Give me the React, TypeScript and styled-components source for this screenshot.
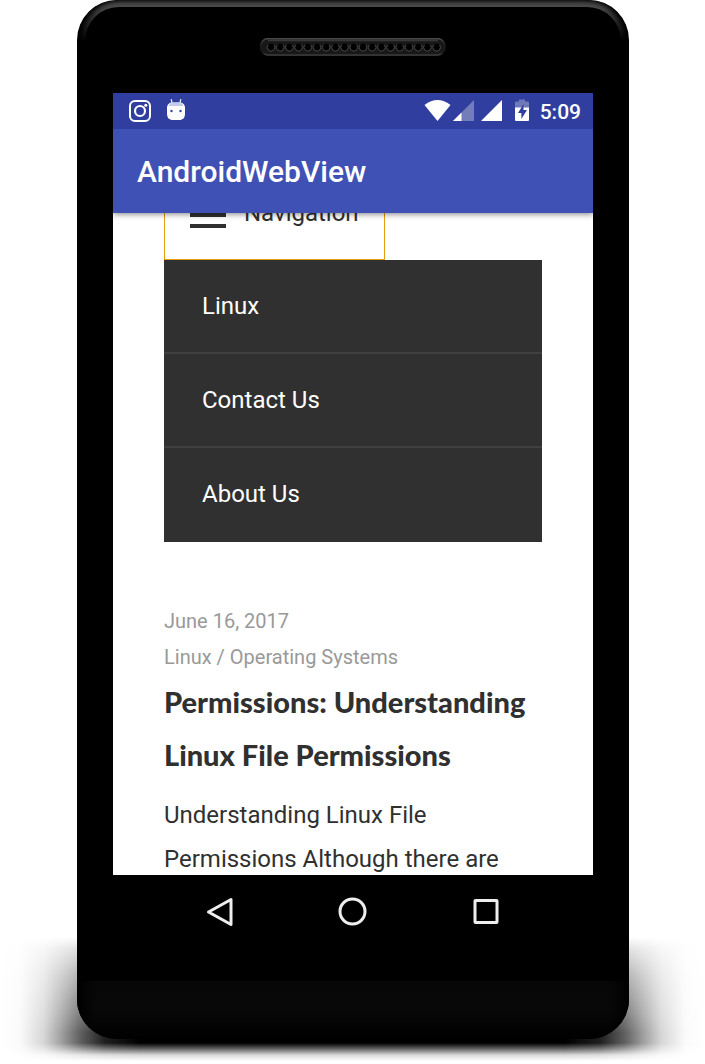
import React from "react";
import styled, { createGlobalStyle } from "styled-components";

const GlobalStyle = createGlobalStyle`
  * { box-sizing: border-box; }
  body { margin: 0; background: #fff; font-family: Roboto, "Liberation Sans", sans-serif; }
  button { font: inherit; cursor: pointer; }
  a { color: inherit; text-decoration: none; }
  h1, h2, p, ul { margin: 0; padding: 0; }
`;

const Stage = styled.div`
  position: relative;
  padding: 0 76px 24px 77px;
  overflow: hidden;
`;

const FloorShadow = styled.div`
  position: absolute;
  left: 0;
  right: 0;
  bottom: 2px;
  height: 124px;
  background: linear-gradient(
    to right,
    transparent 0,
    rgba(0, 0, 0, 0.02) 20px,
    rgba(0, 0, 0, 0.16) 44px,
    rgba(0, 0, 0, 0.38) 62px,
    rgba(0, 0, 0, 0.62) 80px,
    rgba(0, 0, 0, 0.88) 105px,
    #000 140px,
    #000 calc(100% - 140px),
    rgba(0, 0, 0, 0.88) calc(100% - 105px),
    rgba(0, 0, 0, 0.62) calc(100% - 80px),
    rgba(0, 0, 0, 0.38) calc(100% - 62px),
    rgba(0, 0, 0, 0.16) calc(100% - 44px),
    rgba(0, 0, 0, 0.02) calc(100% - 20px),
    transparent 100%
  );
  mask-image: linear-gradient(
    to bottom,
    transparent 0,
    rgba(0, 0, 0, 0.2) 12px,
    rgba(0, 0, 0, 0.5) 40px,
    rgba(0, 0, 0, 0.8) 76px,
    #000 96px,
    #000 106px,
    rgba(0, 0, 0, 0.6) 112px,
    rgba(0, 0, 0, 0.15) 118px,
    transparent 124px
  );
`;

const Phone = styled.div`
  position: relative;
  display: flex;
  flex-direction: column;
  padding: 0 36px;
  overflow: hidden;
  border-radius: 40px;
  background: #000;
`;

const TopGloss = styled.div`
  position: absolute;
  inset: 0 0 auto;
  height: 60px;
  border-radius: 40px 40px 0 0;
  background: #484848;
  mask-image: linear-gradient(to bottom, #000 0, #000 8px, transparent 42px);

  &::after {
    content: "";
    position: absolute;
    inset: 7px 8px 0;
    border-radius: 34px 34px 0 0;
    background: #000;
  }
  &::before {
    content: "";
    position: absolute;
    inset: 0;
    border-radius: 40px 40px 0 0;
    box-shadow: inset 5px 0 5px #000, inset -5px 0 5px #000;
  }
`;

const Earpiece = styled.div`
  position: relative;
  display: flex;
  justify-content: center;
  align-items: center;
  height: 93px;
`;

const Screen = styled.div`
  background: #fff;
`;

const StatusBar = styled.div`
  display: flex;
  align-items: center;
  justify-content: space-between;
  height: 36px;
  padding: 0 12px 0 16px;
  background: #303f9f;
  color: #fff;
`;

const Notifications = styled.div`
  display: flex;
  align-items: center;
  gap: 15px;
`;

const Indicators = styled.div`
  display: flex;
  align-items: center;
`;

const Clock = styled.time`
  margin-left: 8px;
  padding-top: 2px;
  font-size: 21px;
  line-height: 34px;
  font-weight: 500;
`;

const AppBar = styled.header`
  position: relative;
  z-index: 1;
  display: flex;
  align-items: center;
  height: 84px;
  padding: 2px 24px 0;
  background: #3f51b5;
  box-shadow: 0 1px 6px rgba(0, 0, 0, 0.5);
  clip-path: inset(0 0 -8px 0);
  color: #fff;
`;

const AppTitle = styled.h1`
  font-size: 30px;
  line-height: 40px;
  font-weight: 500;
`;

const WebView = styled.main`
  max-height: 662px;
  padding: 0 51px;
  overflow: hidden;
  color: #303030;
`;

const SiteNav = styled.nav`
  margin-top: -47px;
`;

const MenuToggle = styled.button`
  display: flex;
  align-items: center;
  gap: 18px;
  height: 94px;
  padding: 0 25px;
  border: 1px solid #e89c10;
  background: #fff;
  color: #303030;
  font-size: 24px;
  line-height: 44px;
`;

const MenuList = styled.ul`
  list-style: none;
  background: #303030;
  color: #fff;
`;

const MenuItem = styled.li`
  height: 94px;
  border-bottom: 2px solid #404040;

  &:last-child { border-bottom: 0; }
`;

const MenuLink = styled.a`
  display: flex;
  align-items: center;
  height: 92px;
  padding: 0 38px;
  font-size: 24px;
  line-height: 44px;
`;

const Article = styled.article`
  padding-top: 61px;
`;

const Meta = styled.p`
  color: #999;
  font-size: 20px;
  line-height: 36px;
`;

const ArticleTitle = styled.h2`
  font-family: Lato, "Open Sans", sans-serif;
  font-size: 29px;
  line-height: 53px;
  font-weight: 900;
`;

const Excerpt = styled.p`
  padding-top: 12px;
  font-size: 24px;
  line-height: 44px;
`;

const SystemNav = styled.nav`
  display: flex;
  justify-content: space-between;
  height: 106px;
  padding: 0 83px;
`;

const SystemButton = styled.button`
  width: 48px;
  height: 73px;
  padding: 0;
  border: 0;
  background: transparent;
  line-height: 0;
`;

const Chin = styled.div`
  height: 58px;
  margin: 0 -36px;
  background:
    linear-gradient(to right, #000, transparent 20px, transparent calc(100% - 20px), #000),
    linear-gradient(to bottom, #070707, #080808 50%, #000);
`;

const holes = Array.from({ length: 19 }, (_, i) => 11 + i * 9.2);

const Speaker = () => (
  <svg width="186" height="18" viewBox="0 0 186 18" aria-hidden="true">
    <defs>
      <linearGradient id="rim" x1="0" y1="0" x2="0" y2="1">
        <stop offset="0" stopColor="#4a4a4a" />
        <stop offset="0.45" stopColor="#1a1a1a" />
        <stop offset="0.85" stopColor="#1a1a1a" />
        <stop offset="1" stopColor="#444" />
      </linearGradient>
    </defs>
    <rect x="0.5" y="0.5" width="184.5" height="16.5" rx="8" fill="#181818" stroke="url(#rim)" strokeWidth="1.5" />
    <path d="M8 2.2H178" stroke="#383838" strokeWidth="2" />
    {holes.map((x) => (
      <g key={x}>
        <circle cx={x} cy="9.3" r="3.5" fill="#000" />
        <path d={`M${x - 3} 7a3.800 3.800 0 1 0 6 0`} fill="none" stroke="#4c4c4c" strokeWidth="0.9" />
      </g>
    ))}
  </svg>
);

const CameraIcon = () => (
  <svg width="22" height="22" viewBox="0 0 22 22" fill="none" stroke="#fff" aria-hidden="true">
    <rect x="1" y="1" width="20" height="20" rx="5" strokeWidth="2" />
    <circle cx="11" cy="11" r="5" strokeWidth="2.2" />
    <circle cx="16.8" cy="5.3" r="1.5" fill="#fff" stroke="none" />
  </svg>
);

const DroidIcon = () => (
  <svg width="20" height="24" viewBox="0 0 20 24" aria-hidden="true">
    <path d="M5.200 0l1 5M14.800 0l-1 5" stroke="#dfe2f2" strokeWidth="1.300" />
    <path d="M1 9C1 5.500 3 3.500 7 3.500h6c4 0 6 2 6 5.500v5c0 5-2 7-6 7H7c-4 0-6-2-6-7z" fill="#fff" />
    <path d="M2.600 7C3.300 4.700 4.700 3.500 7 3.500h6c2.300 0 3.700 1.200 4.400 3.500z" fill="#c5cae9" />
    <circle cx="5.500" cy="12" r="1.200" fill="#303f9f" />
    <circle cx="14.500" cy="12" r="1.200" fill="#303f9f" />
  </svg>
);

const StatusIcons = () => (
  <svg width="108" height="24" viewBox="0 0 108 24" aria-label="Wi-Fi, signal and battery" role="img">
    <path d="M0.500 6Q13.500-4 26.500 6L13.500 22z" fill="#fff" />
    <path d="M50 1V22H29z" fill="#737db9" />
    <path d="M37.500 13.500V22H29z" fill="#fff" />
    <path d="M78 1V22H57z" fill="#fff" />
    <path d="M91 9V3.500q0-1 1-1H95V0.500h6v2h3q1 0 1 1V9z" fill="#6f79b8" />
    <path d="M91 8.500h14V21q0 1-1 1H92q-1 0-1-1z" fill="#fff" />
    <path d="M99.500 5L94 14h3.400V20L103 11H99.500z" fill="#303f9f" />
  </svg>
);

const BurgerIcon = () => (
  <svg width="36" height="30" viewBox="0 0 36 30" fill="#303030" aria-hidden="true">
    <path d="M0 3h36v4.500H0zM0 14.500h36V19H0zM0 26h36v4H0z" />
  </svg>
);

const navShapes = {
  Back: <path d="M12.500 31L35 18.500V43.500z" />,
  Home: <circle cx="23.500" cy="30.500" r="12.500" />,
  Overview: <rect x="13" y="19.500" width="22" height="22" rx="0.500" />,
};

const App = () => (
  <>
    <GlobalStyle />
    <Stage>
      <FloorShadow />
      <Phone>
        <TopGloss />
        <Earpiece><Speaker /></Earpiece>
        <Screen>
          <StatusBar>
            <Notifications><CameraIcon /><DroidIcon /></Notifications>
            <Indicators><StatusIcons /><Clock>5:09</Clock></Indicators>
          </StatusBar>
          <AppBar><AppTitle>AndroidWebView</AppTitle></AppBar>
          <WebView>
            <SiteNav>
              <MenuToggle type="button" aria-expanded="true"><BurgerIcon />Navigation</MenuToggle>
              <MenuList>
                {["Linux", "Contact Us", "About Us"].map((label) => (
                  <MenuItem key={label}><MenuLink href="#">{label}</MenuLink></MenuItem>
                ))}
              </MenuList>
            </SiteNav>
            <Article>
              <Meta>June 16, 2017</Meta>
              <Meta><a href="#">Linux</a> / <a href="#">Operating Systems</a></Meta>
              <ArticleTitle>Permissions: Understanding Linux File Permissions</ArticleTitle>
              <Excerpt>Understanding Linux File Permissions Although there are</Excerpt>
            </Article>
          </WebView>
        </Screen>
        <SystemNav>
          {Object.entries(navShapes).map(([name, shape]) => (
            <SystemButton key={name} type="button" aria-label={name}>
              <svg width="48" height="62" viewBox="0 0 48 62" fill="none" stroke="#eee" strokeWidth="3" strokeLinejoin="round">
                {shape}
              </svg>
            </SystemButton>
          ))}
        </SystemNav>
        <Chin />
      </Phone>
    </Stage>
  </>
);

export default App;
